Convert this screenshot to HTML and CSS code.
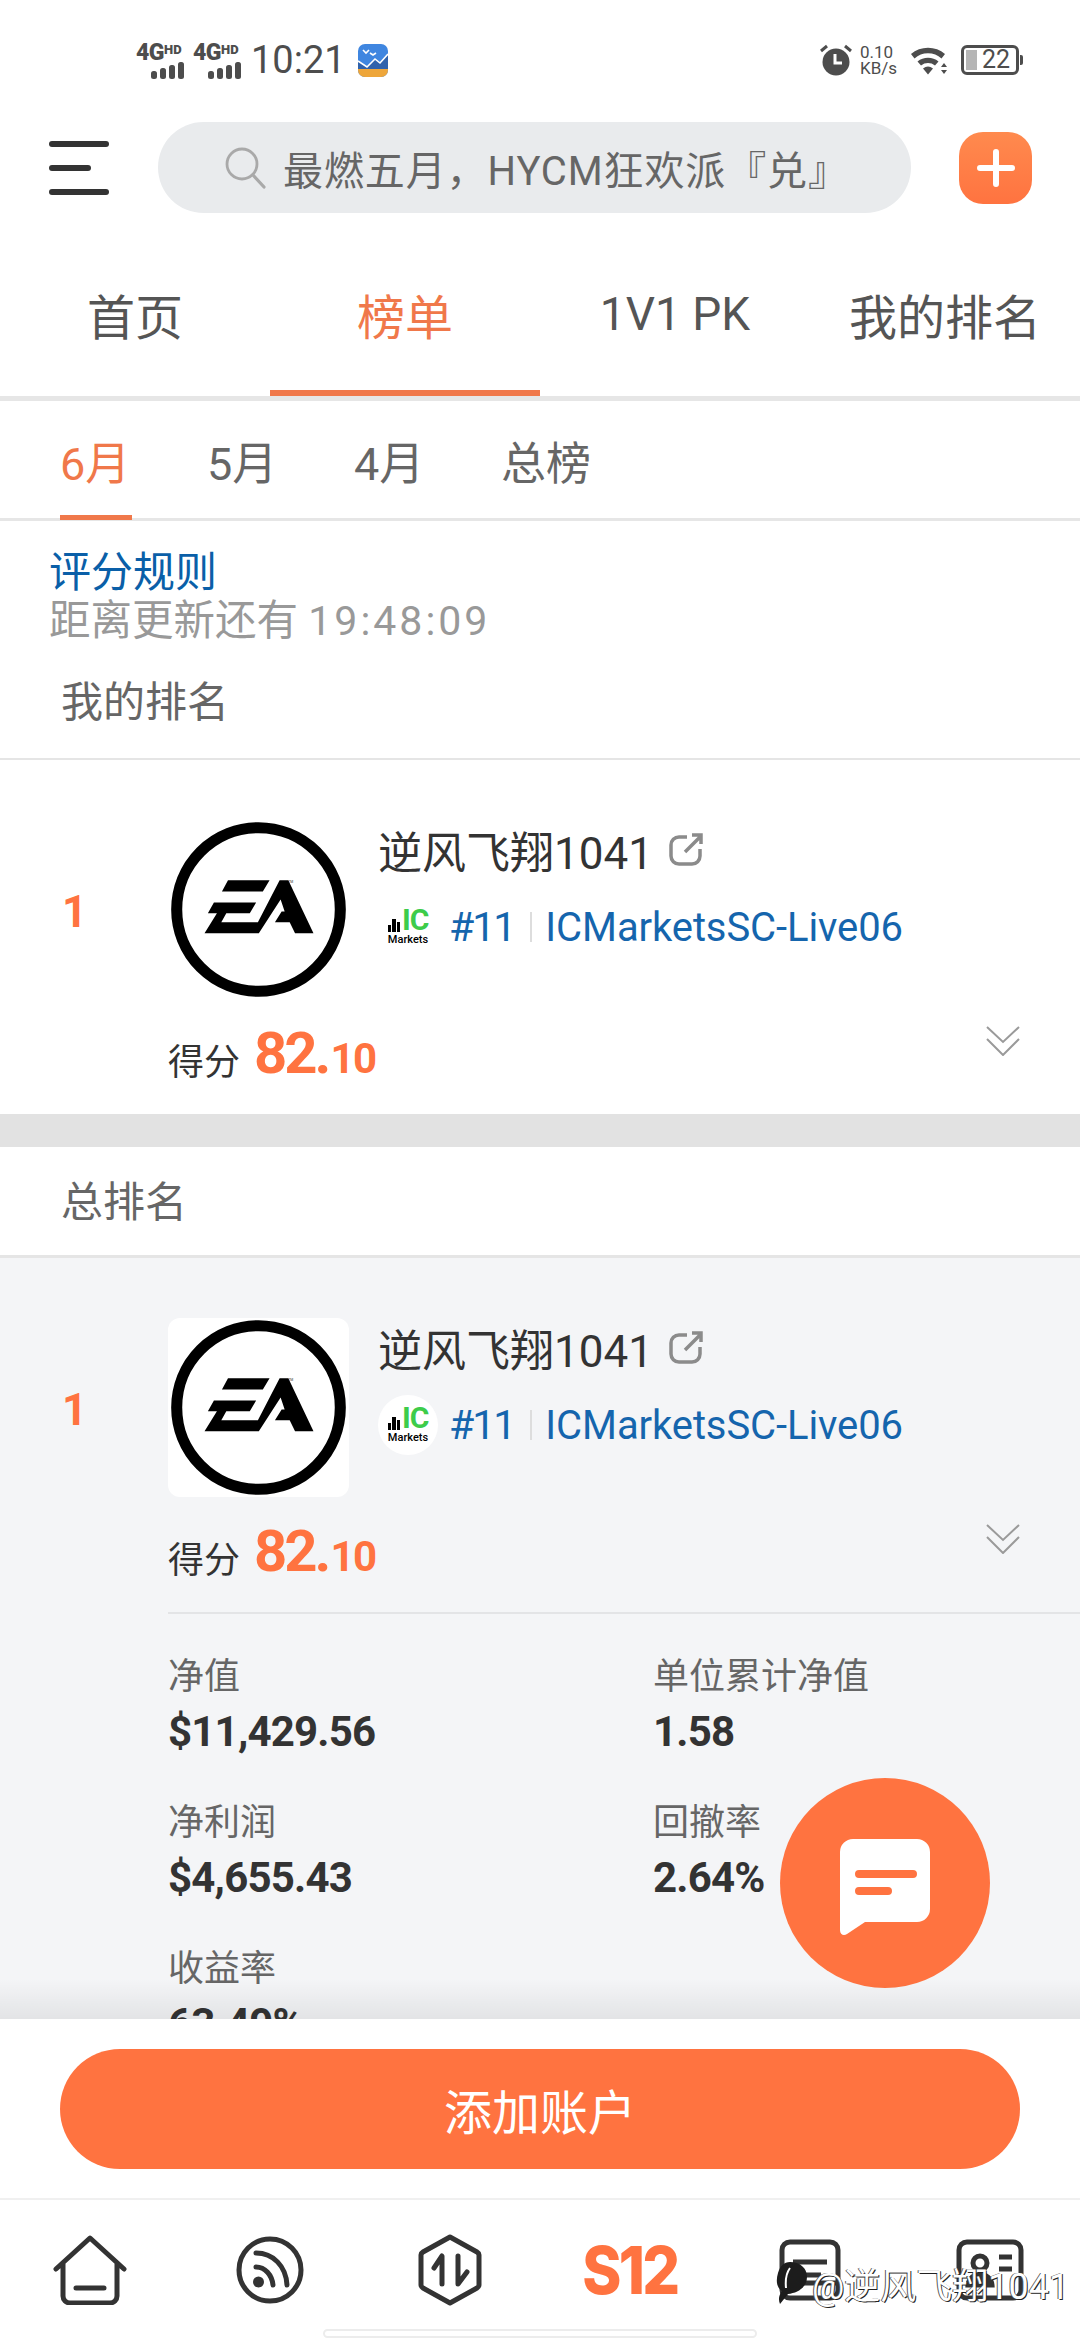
FILE: index.html
```html
<!DOCTYPE html>
<html lang="zh-CN">
<head>
    <meta charset="UTF-8">
    <meta name="viewport" content="width=device-width, initial-scale=1.0">
    <title>榜单</title>
    <link rel="stylesheet" href="styles.css">
</head>
<body>
    <div class="app">
        <!-- status bar -->
        <div class="status">
            <div class="net"><span class="net-label">4G<small>HD</small></span><span class="bars"><i class="b1"></i><i class="b2"></i><i class="b3"></i><i class="b4"></i></span></div>
            <div class="net"><span class="net-label">4G<small>HD</small></span><span class="bars"><i class="b1"></i><i class="b2"></i><i class="b3"></i><i class="b4"></i></span></div>
            <span class="clock">10:21</span>
            <svg class="app-icon" width="30" height="33" viewBox="0 0 30 33">
                <rect width="30" height="33" rx="7" fill="#3f86e0"/>
                <path d="M0 25h30v1a7 7 0 0 1-7 7H7a7 7 0 0 1-7-7z" fill="#eea63a"/>
                <path d="M0 17l9 6 8-8 5 4 8-9v15H0z" fill="#2f62ac"/>
                <path d="M0 17l9 6 8-8 5 4 8-9M5 6l3 3 3-3M12 9l3 2 3-2" fill="none" stroke="#fff" stroke-width="1.600"/>
            </svg>
            <div class="status-right">
                <svg width="32" height="32" viewBox="0 0 32 32">
                    <circle cx="16" cy="18" r="13.500" fill="#4d4d4d"/>
                    <path d="M1 7l6-5M31 7l-6-5" stroke="#4d4d4d" stroke-width="3" fill="none"/>
                    <path d="M15 10v9h7" stroke="#fff" stroke-width="3" fill="none"/>
                </svg>
                <div class="speed"><span>0.10</span><span>KB/s</span></div>
                <svg class="wifi" width="38" height="30" viewBox="0 0 38 30">
                    <path d="M1 9a26 26 0 0 1 34 0l-3.500 4.500a20 20 0 0 0-27 0z" fill="#4d4d4d"/>
                    <path d="M7.500 16.500a17 17 0 0 1 21 0l-3.500 4a11.500 11.500 0 0 0-14 0z" fill="#4d4d4d"/>
                    <path d="M13 23.500a8 8 0 0 1 10 0L18 29.500z" fill="#4d4d4d"/>
                    <path d="M31 22l3-4 3 4zM31 25h6l-3 4z" fill="#4d4d4d"/>
                </svg>
                <div class="battery"><span class="battery-fill"></span><span class="battery-num">22</span></div>
            </div>
        </div>

        <!-- search header -->
        <div class="header">
            <div class="menu"><i class="long"></i><i class="short"></i><i class="long"></i></div>
            <div class="search">
                <svg width="44" height="44" viewBox="0 0 44 44">
                    <circle cx="19" cy="18" r="15" fill="none" stroke="#a9a9a9" stroke-width="2.800"/>
                    <path d="M30 29l11 12" stroke="#a9a9a9" stroke-width="3.200" stroke-linecap="round"/>
                </svg>
                <span>最燃五月，HYCM狂欢派『兑』</span>
            </div>
            <div class="add-btn">
                <svg width="38" height="38" viewBox="0 0 38 38"><path d="M19 3v32M3 19h32" stroke="#fff" stroke-width="6" stroke-linecap="round"/></svg>
            </div>
        </div>

        <div class="tabs">
            <div class="tab">首页</div>
            <div class="tab active">榜单</div>
            <div class="tab tab-latin">1V1 PK</div>
            <div class="tab">我的排名</div>
        </div>

        <div class="subtabs">
            <div class="subtab active">6月</div>
            <div class="subtab">5月</div>
            <div class="subtab">4月</div>
            <div class="subtab">总榜</div>
        </div>

        <div class="main">
            <div class="intro">
                <div class="rule-link">评分规则</div>
                <div class="countdown">距离更新还有 <span>19:48:09</span></div>
                <div class="section-title mine">我的排名</div>
            </div>

            <div class="card">
                <div class="card-top">
                    <div class="rank">1</div>
                    <div class="logo">
                        <svg width="175" height="175" viewBox="68 68 522 522">
                            <circle cx="329" cy="329" r="244" fill="none" stroke="#000" stroke-width="33"/>
                            <path d="M238 242h124l-20 33H220zM196 308h126l-19 32H178zM205 340h28l-15 27h127l-20 33H168zM392 242h26l75 158h-55l-16-33h-44l20-32h9l-12-36-65 101h-20z"/>
                            <text x="418" y="250" class="tm">TM</text>
                        </svg>
                    </div>
                    <div class="info">
                        <div class="name">逆风飞翔1041
                            <svg width="36" height="34" viewBox="0 0 36 34"><path d="M19 4H11a8 8 0 0 0-8 8v11a8 8 0 0 0 8 8h13a8 8 0 0 0 8-8v-7M17 19L33 3M24 2h9v9" fill="none" stroke="#8b8b8b" stroke-width="3.500"/></svg>
                        </div>
                        <div class="meta">
                            <div class="broker">
                                <span class="broker-mark"><i class="m1"></i><i class="m2"></i><i class="m3"></i><b>IC</b></span>
                                <span class="broker-name">Markets</span>
                            </div>
                            <span class="acct">#11</span>
                            <i class="sep"></i>
                            <span class="server">ICMarketsSC-Live06</span>
                        </div>
                    </div>
                </div>
                <div class="score-row">
                    <div class="score"><span class="score-label">得分</span><span class="score-big">82.</span><span class="score-small">10</span></div>
                    <svg width="34" height="30" viewBox="0 0 34 30"><path d="M1 1l16 15L33 1M1 13l16 16 16-16" fill="none" stroke="#9a9a9a" stroke-width="2"/></svg>
                </div>
            </div>

            <div class="band"></div>
            <div class="section-head"><div class="section-title">总排名</div></div>

            <div class="card open">
                <div class="card-top">
                    <div class="rank">1</div>
                    <div class="logo">
                        <svg width="175" height="175" viewBox="68 68 522 522">
                            <circle cx="329" cy="329" r="244" fill="none" stroke="#000" stroke-width="33"/>
                            <path d="M238 242h124l-20 33H220zM196 308h126l-19 32H178zM205 340h28l-15 27h127l-20 33H168zM392 242h26l75 158h-55l-16-33h-44l20-32h9l-12-36-65 101h-20z"/>
                            <text x="418" y="250" class="tm">TM</text>
                        </svg>
                    </div>
                    <div class="info">
                        <div class="name">逆风飞翔1041
                            <svg width="36" height="34" viewBox="0 0 36 34"><path d="M19 4H11a8 8 0 0 0-8 8v11a8 8 0 0 0 8 8h13a8 8 0 0 0 8-8v-7M17 19L33 3M24 2h9v9" fill="none" stroke="#8b8b8b" stroke-width="3.500"/></svg>
                        </div>
                        <div class="meta">
                            <div class="broker">
                                <span class="broker-mark"><i class="m1"></i><i class="m2"></i><i class="m3"></i><b>IC</b></span>
                                <span class="broker-name">Markets</span>
                            </div>
                            <span class="acct">#11</span>
                            <i class="sep"></i>
                            <span class="server">ICMarketsSC-Live06</span>
                        </div>
                    </div>
                </div>
                <div class="score-row">
                    <div class="score"><span class="score-label">得分</span><span class="score-big">82.</span><span class="score-small">10</span></div>
                    <svg width="34" height="30" viewBox="0 0 34 30"><path d="M1 1l16 15L33 1M1 13l16 16 16-16" fill="none" stroke="#9a9a9a" stroke-width="2"/></svg>
                </div>
                <div class="metrics">
                    <div class="metric"><div class="metric-label">净值</div><div class="metric-value">$11,429.56</div></div>
                    <div class="metric"><div class="metric-label">单位累计净值</div><div class="metric-value">1.58</div></div>
                    <div class="metric"><div class="metric-label">净利润</div><div class="metric-value">$4,655.43</div></div>
                    <div class="metric"><div class="metric-label">回撤率</div><div class="metric-value">2.64%</div></div>
                    <div class="metric"><div class="metric-label">收益率</div><div class="metric-value">63.49%</div></div>
                </div>
            </div>
        </div>

        <div class="fab">
            <svg width="92" height="98" viewBox="0 0 92 98">
                <path d="M14 1h64a13 13 0 0 1 13 13v57a13 13 0 0 1-13 13H26L8 96c-3 2-7 1-7-4V14A13 13 0 0 1 14 1z" fill="#fff"/>
                <path d="M20 36h54M20 53h29" stroke="#ff7340" stroke-width="8" stroke-linecap="round"/>
            </svg>
        </div>

        <div class="footer">
            <div class="add-account">添加账户</div>
            <div class="nav">
                <div class="nav-item">
                    <svg width="74" height="70" viewBox="0 0 74 70">
                        <path d="M3 34L37 3l34 31M10 28v33a7 7 0 0 0 7 7h40a7 7 0 0 0 7-7V28M23 53h28" fill="none" stroke="#333" stroke-width="5" stroke-linecap="round" stroke-linejoin="round"/>
                    </svg>
                </div>
                <div class="nav-item">
                    <svg width="68" height="70" viewBox="0 0 68 70">
                        <circle cx="34" cy="35" r="31" fill="none" stroke="#333" stroke-width="5"/>
                        <path d="M20 18c17 0 30 13 31 32M20 32c9 0 16 8 17 18" fill="none" stroke="#333" stroke-width="5" stroke-linecap="round"/>
                        <circle cx="22.500" cy="47" r="5.500" fill="#333"/>
                    </svg>
                </div>
                <div class="nav-item">
                    <svg width="66" height="72" viewBox="0 0 66 72">
                        <path d="M33 3l27 15a4 4 0 0 1 2 3v30a4 4 0 0 1-2 3L33 69 6 54a4 4 0 0 1-2-3V21a4 4 0 0 1 2-3z" fill="none" stroke="#333" stroke-width="5" stroke-linejoin="round"/>
                        <path d="M17 34l8-12v28M41 22v28l9-12" fill="none" stroke="#333" stroke-width="5" stroke-linecap="round" stroke-linejoin="round"/>
                    </svg>
                </div>
                <div class="nav-item"><span class="s12">S12</span></div>
                <div class="nav-item">
                    <svg width="62" height="62" viewBox="0 0 62 62">
                        <rect x="3" y="3" width="56" height="56" rx="8" fill="none" stroke="#333" stroke-width="5"/>
                        <path d="M14 23h34M20 36h22M3 44h56" fill="none" stroke="#333" stroke-width="5"/>
                    </svg>
                </div>
                <div class="nav-item">
                    <svg width="68" height="62" viewBox="0 0 68 62">
                        <rect x="3" y="3" width="62" height="56" rx="8" fill="none" stroke="#333" stroke-width="5"/>
                        <circle cx="24" cy="24" r="7" fill="none" stroke="#333" stroke-width="5"/>
                        <path d="M12 46c1-14 23-14 24 0zM43 18h13M43 30h13" fill="#333" stroke="#333" stroke-width="5"/>
                    </svg>
                </div>
            </div>
            <div class="home-bar"></div>
            <div class="watermark">
                <svg width="38" height="46" viewBox="0 0 38 46">
                    <path d="M20 2c10 0 17 6 17 15 0 10-9 16-19 17l-8 10c-2-5-1-9 2-13C6 27 6 20 8 13 10 6 14 2 20 2z" fill="#1c1c1c"/>
                    <path d="M20 8c-3 4-5 10-4 20M4 20H0M6 30H2" stroke="#fff" stroke-width="2" fill="none"/>
                </svg>
                <span>@逆风飞翔1041</span>
            </div>
        </div>
    </div>
</body>
</html>
```

FILE: styles.css
```css
* { margin: 0; padding: 0; box-sizing: border-box; }
body { width: 1080px; height: 2340px; overflow: hidden; background: #fff; font-family: Roboto, "Noto Sans CJK SC", sans-serif; color: #333; }
i { display: block; font-style: normal; }
.app { position: relative; width: 1080px; height: 2340px; display: flex; flex-direction: column; background: #fff; }

/* status bar */
.status { height: 120px; flex: none; display: flex; align-items: center; padding: 0 61px 0 136px; color: #4d4d4d; }
.net { width: 48px; margin-right: 9px; display: flex; flex-direction: column; align-items: flex-end; }
.net-label { font-size: 23px; line-height: 17px; font-weight: 900; white-space: nowrap; align-self: flex-start; letter-spacing: -0.5px; }
.net-label small { font-size: 13px; font-weight: 900; vertical-align: 6px; letter-spacing: 0; }
.bars { display: flex; align-items: flex-end; gap: 3px; height: 17px; margin-top: 1px; }
.bars i { width: 6px; background: #4d4d4d; border-radius: 2.500px; }
.bars .b1 { height: 8px; }
.bars .b2 { height: 11px; }
.bars .b3 { height: 14px; }
.bars .b4 { height: 17px; }
.clock { font-size: 38px; line-height: 40px; margin-left: 1px; margin-right: 12px; }
.status-right { margin-left: auto; display: flex; align-items: center; }
.speed { margin-left: 8px; display: flex; flex-direction: column; font-size: 17px; line-height: 16px; width: 42px; }
.wifi { margin-left: 8px; }
.battery { position: relative; margin-left: 13px; width: 58px; height: 30px; border: 3px solid #4d4d4d; border-radius: 6px; display: flex; align-items: center; }
.battery:after { content: ""; position: absolute; right: -7px; top: 7px; width: 3px; height: 10px; background: #4d4d4d; border-radius: 0 2px 2px 0; }
.battery-fill { width: 11px; height: 20px; margin-left: 2px; background: #b5b5b5; }
.battery-num { font-size: 25px; line-height: 24px; margin-left: 5px; }

/* header */
.header { height: 95px; flex: none; display: flex; align-items: center; }
.menu { width: 158px; padding-left: 49px; display: flex; flex-direction: column; gap: 18px; }
.menu i { height: 6px; background: #333; border-radius: 3px; }
.menu .long { width: 60px; }
.menu .short { width: 42px; }
.search { width: 753px; height: 91px; background: #e9ebed; border-radius: 46px; display: flex; align-items: center; padding-left: 65px; color: #666; font-size: 40px; letter-spacing: 0.9px; white-space: nowrap; }
.search svg { margin-right: 16px; flex: none; }
.add-btn { width: 73px; height: 72px; margin-left: 48px; border-radius: 24px; background: linear-gradient(#ff8a4e, #ff7340); display: flex; align-items: center; justify-content: center; }

/* top tabs */
.tabs { height: 186px; flex: none; display: flex; border-bottom: 5px solid #e6e6e6; }
.tab { width: 270px; height: 181px; padding-top: 22px; display: flex; align-items: center; justify-content: center; font-size: 48px; color: #555; border-bottom: 6px solid transparent; }
.tab-latin { font-size: 46px; }
.tab.active { color: #f0784a; border-bottom-color: #f0784a; }

/* month tabs */
.subtabs { height: 120px; flex: none; display: flex; gap: 75px; padding-left: 60px; border-bottom: 3px solid #e6e6e6; }
.subtab { min-width: 72px; height: 119px; padding-top: 4px; display: flex; align-items: center; font-size: 45px; color: #666; border-bottom: 5px solid transparent; white-space: nowrap; }
.subtab.active { color: #f0784a; border-bottom-color: #f0784a; }

.main { flex: 1; min-height: 0; overflow: hidden; }
.intro { height: 237px; padding: 28px 0 0 49px; }
.rule-link { font-size: 42px; line-height: 48px; color: #0a5fa8; }
.countdown { font-size: 41.500px; line-height: 48px; color: #999; }
.countdown span { font-size: 41px; letter-spacing: 3px; }
.section-title { font-size: 42px; line-height: 48px; color: #666; padding-left: 12px; }
.mine { margin-top: 34px; }

/* account card */
.card { background: #fff; border-top: 2px solid #e5e5e5; padding-top: 60px; }
.card-top { display: flex; align-items: center; }
.rank { width: 168px; padding: 4px 0 0 62px; font-size: 44px; font-weight: 700; line-height: 50px; color: #ff7340; flex: none; }
.logo { width: 181px; height: 179px; background: #fff; border-radius: 12px; flex: none; display: flex; align-items: center; justify-content: center; }
.tm { font-size: 10px; fill: #333; }
.info { margin-left: 29px; align-self: flex-start; }
.name { height: 60px; margin-bottom: 17px; display: flex; align-items: center; font-size: 44px; color: #333; }
.name svg { margin-left: 15px; }
.meta { height: 60px; display: flex; align-items: center; }
.broker { width: 60px; height: 60px; border-radius: 50%; display: flex; flex-direction: column; align-items: center; justify-content: center; }
.open .broker { background: #fff; }
.broker-mark { display: flex; align-items: flex-end; gap: 1px; height: 24px; }
.broker-mark i { width: 3.500px; background: #000; }
.broker-mark .m1 { height: 7px; }
.broker-mark .m2 { height: 13px; }
.broker-mark .m3 { height: 10px; }
.broker-mark b { font-size: 30px; line-height: 24px; color: #3dcc4a; margin-left: 1px; letter-spacing: -1px; }
.broker-name { font-size: 11px; line-height: 13px; color: #000; font-weight: 500; margin-top: 1px; }
.acct { margin-left: 11px; font-size: 41px; letter-spacing: -2px; color: #1565ad; }
.sep { width: 2px; height: 30px; margin: 0 13px 0 16px; background: #ddd; }
.server { font-size: 40px; letter-spacing: -0.1px; color: #1565ad; }
.score-row { height: 60px; margin: 24px 0 31px 168px; padding-right: 60px; display: flex; justify-content: space-between; }
.score { height: 60px; line-height: 60px; white-space: nowrap; }
.score-label { font-size: 36px; color: #333; margin-right: 14px; }
.score-big { font-size: 58px; font-weight: 700; letter-spacing: -3px; color: #ff7340; vertical-align: 2px; }
.score-small { font-size: 42px; font-weight: 700; letter-spacing: -1.500px; color: #ff7340; margin-left: 2px; vertical-align: 2px; }
.score-row svg { margin-top: 3px; }
.band { height: 33px; background: #e2e2e2; }
.section-head { height: 108px; padding: 32px 0 0 49px; }
.section-head + .card { border-top: 3px solid #e5e5e5; }
.open { background: #f4f5f7; padding-top: 60px; }

/* metrics grid */
.metrics { margin-left: 168px; padding-top: 41px; border-top: 2px solid #e3e4e6; display: grid; grid-template-columns: 485px 1fr; row-gap: 44px; }
.metric-label { font-size: 36px; line-height: 44px; color: #666; }
.metric-value { font-size: 42px; line-height: 50px; font-weight: 700; letter-spacing: -0.8px; color: #333; margin-top: 8px; }

/* chat button, floats over the list */
.fab { position: absolute; left: 780px; top: 1778px; width: 210px; height: 210px; border-radius: 50%; background: #ff7340; display: flex; align-items: center; justify-content: center; padding-top: 8px; }

.footer { position: relative; height: 321px; flex: none; background: #fff; display: flex; flex-direction: column; }
.footer:before { content: ""; position: absolute; left: 0; right: 0; top: -40px; height: 40px; background: linear-gradient(rgba(0, 0, 0, 0), rgba(0, 0, 0, 0.07)); }
.add-account { height: 120px; margin: 30px 60px 29px; border-radius: 60px; background: #ff7340; color: #fff; font-size: 48px; display: flex; align-items: center; justify-content: center; flex: none; }
.nav { height: 106px; flex: none; display: grid; grid-template-columns: repeat(6, 180px); border-top: 2px solid #f0f0f0; padding-top: 34px; }
.nav-item { height: 72px; display: flex; align-items: center; justify-content: center; }
.s12 { font-family: Inter, sans-serif; font-size: 66px; line-height: 72px; font-weight: 800; color: #ff7340; letter-spacing: -3px; transform: scaleX(0.9); }
.home-bar { width: 434px; height: 9px; margin: 25px auto 0; border: 2px solid #ececec; border-radius: 5px; background: #fff; flex: none; }
.watermark { position: absolute; left: 770px; top: 238px; display: flex; align-items: center; }
.watermark span { margin-left: 4px; font-size: 36px; color: #fff; text-shadow: 1px 1px 0 #222, -1px 0 0 #555; white-space: nowrap; }
```
